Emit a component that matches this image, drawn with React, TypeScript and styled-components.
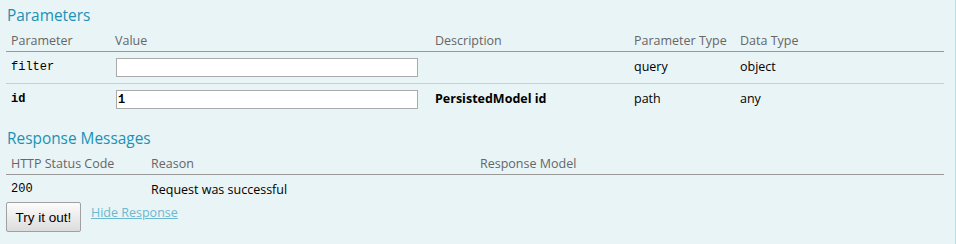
import React from 'react'
import styled, { createGlobalStyle } from 'styled-components'

const GlobalStyle = createGlobalStyle`
  html, body {
    margin: 0;
    padding: 0;
    background: #e9f4f6;
  }
`

const params = [
  { name: 'filter', value: '', description: '', bold: false, paramType: 'query', dataType: 'object' },
  { name: 'id', value: '1', description: 'PersistedModel id', bold: true, paramType: 'path', dataType: 'any' },
]

const responses = [{ code: '200', reason: 'Request was successful', model: '' }]

const App = () => {
  return (
    <Content>
      <GlobalStyle />
      <SectionTitle>Parameters</SectionTitle>
      <Table>
        <colgroup>
          <col style={{ width: 104 }} />
          <col style={{ width: 320 }} />
          <col style={{ width: 199 }} />
          <col style={{ width: 106 }} />
          <col />
        </colgroup>
        <thead>
          <tr>
            <HeadCell>Parameter</HeadCell>
            <HeadCell>Value</HeadCell>
            <HeadCell>Description</HeadCell>
            <HeadCell>Parameter Type</HeadCell>
            <HeadCell>Data Type</HeadCell>
          </tr>
        </thead>
        <tbody>
          {params.map((p) => (
            <ParamRow key={p.name}>
              <CodeCell $bold={p.bold} $top={8}>{p.name}</CodeCell>
              <InputCell>
                <TextInput defaultValue={p.value} $bold={p.bold} />
              </InputCell>
              <Cell $bold={p.bold}>{p.description}</Cell>
              <Cell>{p.paramType}</Cell>
              <Cell>{p.dataType}</Cell>
            </ParamRow>
          ))}
        </tbody>
      </Table>

      <SectionTitle $top={11}>Response Messages</SectionTitle>
      <Table>
        <colgroup>
          <col style={{ width: 140 }} />
          <col style={{ width: 329 }} />
          <col />
        </colgroup>
        <thead>
          <tr>
            <HeadCell>HTTP Status Code</HeadCell>
            <HeadCell>Reason</HeadCell>
            <HeadCell>Response Model</HeadCell>
          </tr>
        </thead>
        <tbody>
          {responses.map((r) => (
            <ResponseRow key={r.code}>
              <CodeCell $top={7}>{r.code}</CodeCell>
              <Cell>{r.reason}</Cell>
              <Cell>{r.model}</Cell>
            </ResponseRow>
          ))}
        </tbody>
      </Table>

      <Actions>
        <TryButton>Try it out!</TryButton>
        <HideLink href="#">Hide Response</HideLink>
      </Actions>
    </Content>
  )
}

export default App

const Content = styled.div`
  box-sizing: border-box;
  width: 956px;
  height: 244px;
  padding: 4px 11px 0 6px;
  background: #e9f4f6;
  border-right: 1px solid #b4dfea;
  font-family: 'Open Sans', sans-serif;
  color: #000;
`

const SectionTitle = styled.h4<{ $top?: number }>`
  margin: ${(p) => p.$top || 0}px 0 0 1px;
  padding-top: 1px;
  font-size: 15.4px;
  font-weight: 400;
  line-height: 21px;
  color: #1b92b5;
`

const Table = styled.table`
  width: 938px;
  border-collapse: collapse;
  table-layout: fixed;
`

const HeadCell = styled.th`
  padding: 6px 5px 2px;
  line-height: 17px;
  text-align: left;
  vertical-align: top;
  font-size: 12.5px;
  font-weight: 400;
  color: #666;
  border-bottom: 1px solid #999;
`

const ParamRow = styled.tr`
  height: 32px;
  border-bottom: 1px solid #c9cfd1;
  &:last-child {
    border-bottom: none;
  }
`

const ResponseRow = styled.tr`
  height: 26px;
`

const Cell = styled.td<{ $bold?: boolean }>`
  padding: 6px 5px 0;
  line-height: 17px;
  vertical-align: top;
  font-size: 12.5px;
  font-weight: ${(p) => (p.$bold ? 700 : 400)};
`

const CodeCell = styled(Cell)<{ $top?: number }>`
  padding-top: ${(p) => p.$top ?? 6}px;
  line-height: 14px;
  font-family: 'Liberation Mono', monospace;
  font-size: 12px;
`

const InputCell = styled(Cell)`
  padding-left: 6px;
`

const TextInput = styled.input<{ $bold?: boolean }>`
  box-sizing: border-box;
  display: block;
  width: 302px;
  height: 19px;
  margin: 0;
  padding: 1px 1px;
  border: 1px solid #aaa;
  background: #fff;
  font-family: 'Liberation Mono', monospace;
  font-size: 12px;
  font-weight: ${(p) => (p.$bold ? 700 : 400)};
  outline: none;
`

const Actions = styled.div`
  display: flex;
  align-items: flex-start;
  gap: 10px;
  margin-top: 2px;
`

const TryButton = styled.button`
  width: 75px;
  height: 30px;
  padding: 0;
  border: 1px solid #a0a0a0;
  border-radius: 2px;
  background: linear-gradient(#fcfcfc, #dcdcdc);
  font-family: 'Liberation Sans', Arial, sans-serif;
  font-size: 13.5px;
  color: #000;
`

const HideLink = styled.a`
  margin-top: 2px;
  font-size: 12.5px;
  color: #6cb8cf;
  text-decoration: underline;
`
